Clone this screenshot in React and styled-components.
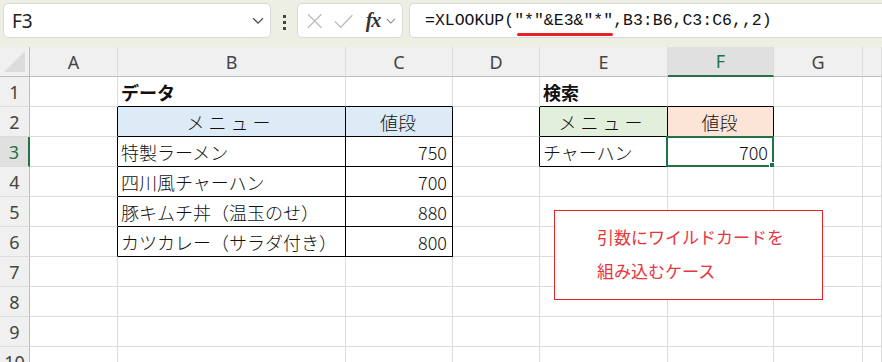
import React from "react";
import styled, { createGlobalStyle, css } from "styled-components";

const GlobalStyle = createGlobalStyle`
  html, body {
    margin: 0;
    padding: 0;
    overflow: hidden;
    background: #ffffff;
  }
  body {
    font-family: "Noto Sans", "Noto Sans CJK JP", sans-serif;
  }
`;

const GREEN = "#217346";
const GRID = "#dcdcdc";

const Window = styled.div`
  width: 882px;
  height: 362px;
  display: flex;
  flex-direction: column;
  overflow: hidden;
`;

/* ---------- formula bar ---------- */

const FormulaBar = styled.div`
  height: 47px;
  flex: none;
  box-sizing: border-box;
  padding: 3px 0 0 3px;
  background: #edefe5;
  display: flex;
  align-items: flex-start;
`;

const Box = styled.div`
  height: 35px;
  box-sizing: border-box;
  background: #ffffff;
  border: 1px solid #d9dad3;
  border-radius: 5px;
  display: flex;
  align-items: center;
`;

const NameBox = styled(Box)`
  width: 268px;
  padding: 0 6px 0 8px;
  justify-content: space-between;
  font-family: "Noto Sans", sans-serif;
  font-size: 19px;
  color: #222;
`;

const Dots = styled.div`
  width: 26px;
  display: flex;
  flex-direction: column;
  align-items: center;
  gap: 3px;
  padding-top: 12px;

  span {
    width: 3px;
    height: 3px;
    background: #444;
  }
`;

const FnBox = styled(Box)`
  width: 106px;
  padding: 0 6px 0 9px;
  gap: 6px;
`;

const FormulaBox = styled(Box)`
  flex: 1;
  margin-left: 6px;
  border-right: none;
  border-radius: 5px 0 0 5px;
  padding-left: 15px;
  font-family: "Liberation Mono", monospace;
  font-size: 16.5px;
  color: #111;
  white-space: pre;
`;

const Marked = styled.span`
  position: relative;
  &::after {
    content: "";
    position: absolute;
    left: 3px;
    right: 0;
    bottom: -6px;
    height: 3px;
    border-radius: 2px;
    background: #e8202a;
  }
`;

const Fx = styled.span`
  font-family: "Liberation Serif", serif;
  font-style: italic;
  font-weight: bold;
  font-size: 20px;
  color: #333;
  margin-left: 6px;
  letter-spacing: -1px;
`;

const Chevron = ({ color = "#444", size = 12 }) => (
  <svg width={size} height={size * 0.6} viewBox="0 0 12 7" fill="none">
    <path d="M1 1l5 5 5-5" stroke={color} strokeWidth="1.3" />
  </svg>
);

/* ---------- sheet ---------- */

const Sheet = styled.div`
  position: relative;
  flex: 1;
  display: grid;
  grid-template-columns: 30px 88px 228px 107px 87px 128px 106px 89px 1fr;
  grid-auto-rows: 30px;
  font-family: "Noto Sans CJK JP", sans-serif;
  font-size: 18px;
  font-weight: 300;
  color: #111;
`;

const Head = styled.div`
  box-sizing: border-box;
  background: ${(p) => (p.$active ? "#e0e0e0" : "#f0f0f0")};
  color: ${(p) => (p.$active ? GREEN : "#444")};
  font-family: "Noto Sans", sans-serif;
  font-weight: 400;
  font-size: 18px;
  display: flex;
  align-items: center;
  justify-content: center;
  position: relative;
`;

const ColHead = styled(Head)`
  border-right: 1px solid ${GRID};
  border-bottom: ${(p) => (p.$active ? `2px solid ${GREEN}` : "1px solid #bdbdbd")};
`;

const RowHead = styled(Head)`
  border-bottom: 1px solid ${GRID};
  border-right: ${(p) => (p.$active ? `2px solid ${GREEN}` : "1px solid #bdbdbd")};
`;

const Corner = styled(Head)`
  border-right: 1px solid #bdbdbd;
  border-bottom: 1px solid #bdbdbd;

  &::after {
    content: "";
    position: absolute;
    right: 4px;
    bottom: 4px;
    border-style: solid;
    border-width: 0 0 21px 21px;
    border-color: transparent transparent #dcdcdc transparent;
  }
`;

const Cell = styled.div`
  box-sizing: border-box;
  position: relative;
  border-right: 1px solid ${(p) => (p.$r ? "#000" : GRID)};
  border-bottom: 1px solid ${(p) => (p.$b ? "#000" : GRID)};
  background: ${(p) => p.$bg || "#ffffff"};
  padding: 0 5px 0 3px;
  display: flex;
  align-items: center;
  white-space: nowrap;
  justify-content: ${(p) =>
    p.$align === "right" ? "flex-end" : p.$align === "center" ? "center" : "flex-start"};
  ${(p) =>
    p.$bold &&
    css`
      font-weight: bold;
    `}
  ${(p) =>
    p.$spaced &&
    css`
      letter-spacing: 4px;
    `}
`;

const Selection = styled.div`
  position: absolute;
  left: -2px;
  top: -1px;
  right: -1px;
  bottom: -1px;
  border: 2px solid ${GREEN};
  pointer-events: none;

  &::after {
    content: "";
    position: absolute;
    right: -5px;
    bottom: -5px;
    width: 6px;
    height: 6px;
    background: ${GREEN};
    border: 1px solid #fff;
  }
`;

const Callout = styled.div`
  position: absolute;
  left: 554px;
  top: 163px;
  width: 269px;
  height: 90px;
  box-sizing: border-box;
  border: 1.5px solid #e8202a;
  background: #ffffff;
  padding: 9px 0 0 42px;
  color: #e8343c;
  font-size: 17px;
  font-weight: 400;
  line-height: 34px;
`;

const LETTERS = ["A", "B", "C", "D", "E", "F", "G", ""];

const BLUE = "#ddebf7";
const LIGHT_GREEN = "#e2efda";
const ORANGE = "#fce4d6";

// one entry per row: cells A..H
const rows = [
  [{}, { t: "データ", bold: true, b: 1 }, { b: 1 }, {}, { t: "検索", bold: true, b: 1 }, { b: 1 }, {}, {}],
  [
    { r: 1 },
    { t: "メニュー", align: "center", bg: BLUE, r: 1, b: 1, spaced: true },
    { t: "値段", align: "center", bg: BLUE, r: 1, b: 1 },
    { r: 1 },
    { t: "メニュー", align: "center", bg: LIGHT_GREEN, r: 1, b: 1, spaced: true },
    { t: "値段", align: "center", bg: ORANGE, r: 1, b: 1 },
    {},
    {},
  ],
  [
    { r: 1 },
    { t: "特製ラーメン", r: 1, b: 1 },
    { t: "750", align: "right", r: 1, b: 1 },
    { r: 1 },
    { t: "チャーハン", r: 1, b: 1 },
    { t: "700", align: "right", r: 1, b: 1, sel: true },
    {},
    {},
  ],
  [{ r: 1 }, { t: "四川風チャーハン", r: 1, b: 1 }, { t: "700", align: "right", r: 1, b: 1 }, {}, {}, {}, {}, {}],
  [{ r: 1 }, { t: "豚キムチ丼（温玉のせ）", r: 1, b: 1 }, { t: "880", align: "right", r: 1, b: 1 }, {}, {}, {}, {}, {}],
  [{ r: 1 }, { t: "カツカレー（サラダ付き）", r: 1, b: 1 }, { t: "800", align: "right", r: 1, b: 1 }, {}, {}, {}, {}, {}],
  [{}, {}, {}, {}, {}, {}, {}, {}],
  [{}, {}, {}, {}, {}, {}, {}, {}],
  [{}, {}, {}, {}, {}, {}, {}, {}],
  [{}, {}, {}, {}, {}, {}, {}, {}],
];

export default function App() {
  return (
    <Window>
      <GlobalStyle />
      <FormulaBar>
        <NameBox>
          F3
          <Chevron />
        </NameBox>
        <Dots>
          <span />
          <span />
          <span />
        </Dots>
        <FnBox>
          <svg width="16" height="16" viewBox="0 0 16 16">
            <path d="M1 1l14 14M15 1L1 15" stroke="#bcbcbc" strokeWidth="1.3" />
          </svg>
          <svg width="20" height="16" viewBox="0 0 20 16" style={{ marginLeft: 6 }}>
            <path d="M1 8.5l6 6L19 2" stroke="#bcbcbc" strokeWidth="1.3" fill="none" />
          </svg>
          <Fx>fx</Fx>
          <Chevron color="#888" size={10} />
        </FnBox>
        <FormulaBox>
          =XLOOKUP(<Marked>"*"&E3&"*"</Marked>,B3:B6,C3:C6,,2)
        </FormulaBox>
      </FormulaBar>

      <Sheet>
        <Corner />
        {LETTERS.map((l) => (
          <ColHead key={"h" + l} $active={l === "F"}>
            {l}
          </ColHead>
        ))}
        {rows.map((row, i) => (
          <React.Fragment key={i}>
            <RowHead $active={i === 2}>{i + 1}</RowHead>
            {row.map((c, j) => (
              <Cell
                key={j}
                $r={c.r}
                $b={c.b}
                $bg={c.bg}
                $align={c.align}
                $bold={c.bold}
                $spaced={c.spaced}
              >
                {c.t}
                {c.sel && <Selection />}
              </Cell>
            ))}
          </React.Fragment>
        ))}
        <Callout>
          引数にワイルドカードを
          <br />
          組み込むケース
        </Callout>
      </Sheet>
    </Window>
  );
}
